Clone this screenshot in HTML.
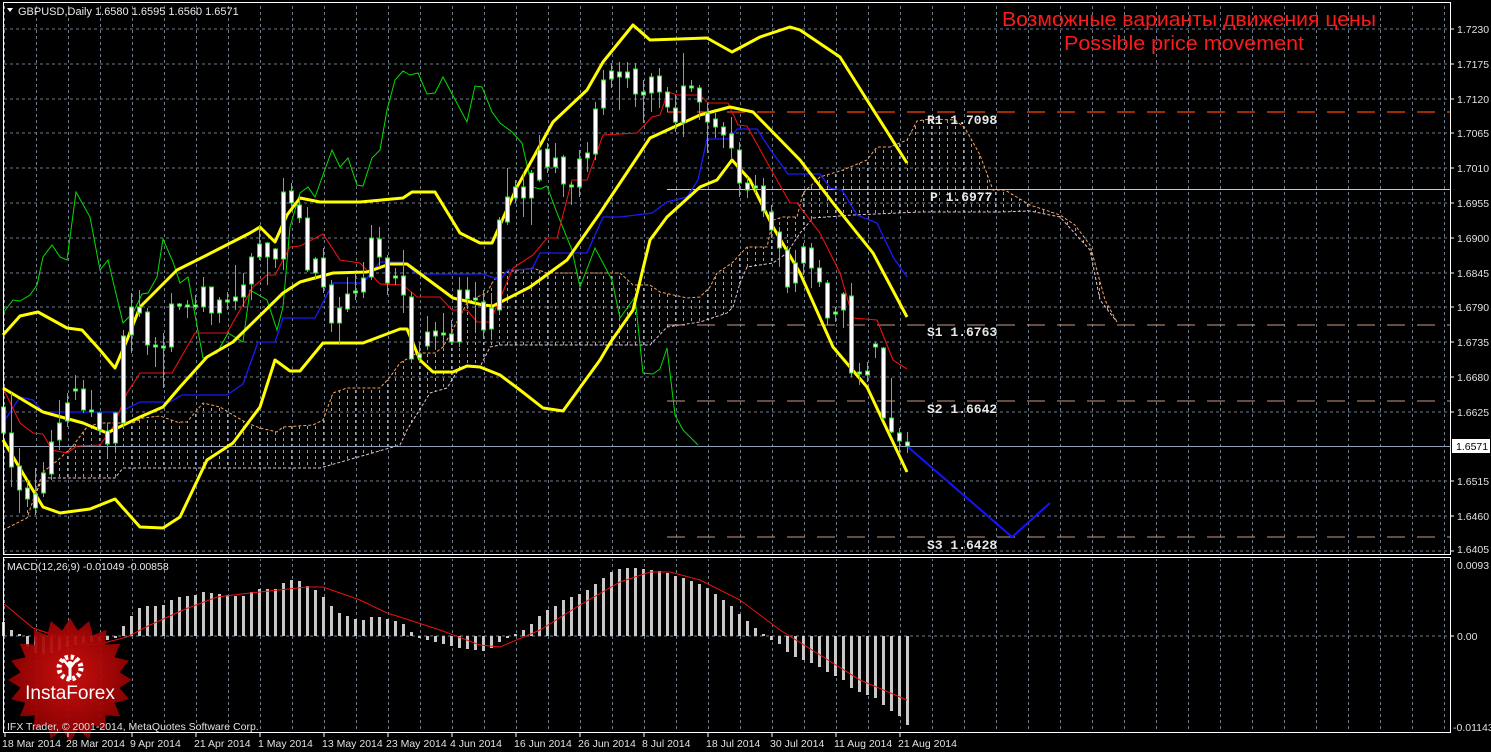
<!DOCTYPE html>
<html><head><meta charset="utf-8"><style>
html,body{margin:0;padding:0;background:#000;}
svg{display:block}
text{font-family:"Liberation Sans",sans-serif}
text.mono{font-family:"Liberation Mono",monospace;font-weight:bold;font-size:13px}
</style></head><body>
<svg width="1491" height="752" viewBox="0 0 1491 752" xmlns="http://www.w3.org/2000/svg">
<defs>
<pattern id="vg" x="36" y="0" width="32" height="6" patternUnits="userSpaceOnUse"><rect x="0" y="0" width="1" height="3" fill="#6f7d8c"/></pattern>
<pattern id="hatch" x="3" y="0" width="8" height="6" patternUnits="userSpaceOnUse"><rect x="0" y="0" width="1" height="3" fill="#d9925e"/></pattern>
<radialGradient id="rg" cx="50%" cy="45%" r="55%"><stop offset="0" stop-color="#d81010"/><stop offset="1" stop-color="#8c0000"/></radialGradient>
</defs>
<rect width="1491" height="752" fill="#000"/>
<rect x="4" y="4" width="1446" height="550" fill="url(#vg)"/>
<rect x="4" y="559" width="1446" height="173" fill="url(#vg)"/>
<path d="M4 29H1450M4 64H1450M4 99H1450M4 133H1450M4 168H1450M4 203H1450M4 238H1450M4 273H1450M4 307H1450M4 342H1450M4 377H1450M4 412H1450M4 481H1450M4 516H1450M4 551H1450M4 636H1450" stroke="#6f7d8c" stroke-width="1" stroke-dasharray="3,3"/>
<polygon fill="url(#hatch)" points="3,530 27,518 43,472 58,460 72,447 87,427 100,423 133,423 143,418 160,416 177,422 187,422 203,403 220,407 233,415 247,423 260,428 277,432 283,427 313,425 323,420 333,393 347,388 380,388 390,377 400,363 417,353 435,353 443,347 458,320 467,303 477,297 487,293 492,283 500,273 533,268 547,273 620,273 633,285 650,285 660,292 687,298 700,297 710,287 717,273 732,263 747,247 767,247 773,220 783,217 797,217 803,193 820,177 843,170 867,160 877,147 890,147 907,140 917,121 930,119 955,120 965,128 980,155 993,190 1005,190 1030,205 1060,215 1075,225 1090,245 1105,300 1117,322 1100,300 1090,250 1060,217 1030,211 1000,212 920,212 853,215 827,217 813,218 800,233 787,253 773,263 747,267 740,283 733,307 727,313 700,322 667,327 650,345 620,345 500,345 490,347 480,367 460,367 447,388 430,393 407,430 400,445 320,468 123,468 115,478 50,478 43,477 33,500 20,520 3,530"/>
<polyline fill="none" stroke="#f4a460" stroke-width="1" stroke-dasharray="3,2" points="3,530 27,518 43,472 58,460 72,447 87,427 100,423 133,423 143,418 160,416 177,422 187,422 203,403 220,407 233,415 247,423 260,428 277,432 283,427 313,425 323,420 333,393 347,388 380,388 390,377 400,363 417,353 435,353 443,347 458,320 467,303 477,297 487,293 492,283 500,273 533,268 547,273 620,273 633,285 650,285 660,292 687,298 700,297 710,287 717,273 732,263 747,247 767,247 773,220 783,217 797,217 803,193 820,177 843,170 867,160 877,147 890,147 907,140 917,121 930,119 955,120 965,128 980,155 993,190 1005,190 1030,205 1060,215 1075,225 1090,245 1105,300 1117,322"/>
<polyline fill="none" stroke="#e6c4d6" stroke-width="1" stroke-dasharray="3,2" points="33,500 43,477 50,478 115,478 123,468 320,468 400,445 407,430 430,393 447,388 460,367 480,367 490,347 500,345 650,345 667,327 700,322 727,313 733,307 740,283 747,267 773,263 787,253 800,233 813,218 827,217 853,215 920,212 1000,212 1030,211 1060,217 1090,250 1100,300 1117,322"/>
<path d="M667 112H1450" stroke="#ff4500" stroke-width="1.3" stroke-dasharray="18,12"/>
<path d="M667 189.5H1450" stroke="#ffd700" stroke-width="1"/>
<path d="M667 325H1450M667 401H1450M667 537H1450" stroke="#c89a86" stroke-width="1" stroke-dasharray="18,12"/>
<path d="M4 446.5H1450" stroke="#8fa0b4" stroke-width="1"/>
<polyline fill="none" stroke="#00e000" stroke-width="1" points="3,313 13,300 20,301 30,295 37,285 43,257 52,245 60,257 67,260 76,192 90,217 100,270 108,260 123,323 133,313 142,294 148,293 157,277 163,239 173,262 180,283 188,277 203,358 217,353 228,333 243,342 250,290 267,300 277,330 283,307 290,227 300,193 308,187 315,197 332,150 340,167 348,158 357,185 363,186 372,158 380,150 387,110 395,80 403,71 410,75 418,73 427,94 435,93 443,77 467,122 475,86 482,87 492,112 500,123 512,132 522,143 532,187 540,189 547,186 557,213 572,250 580,287 595,248 612,280 620,318 635,297 643,373 653,374 660,369 667,348 675,415 683,430 698,445"/>
<polyline fill="none" stroke="#1a1aff" stroke-width="1.3" points="3,423 20,397 33,400 43,412 120,412 140,402 170,402 182,395 227,395 243,384 258,342 275,342 283,318 315,318 333,283 363,283 380,262 403,262 417,274 483,274 500,280 508,270 532,269 540,253 587,253 603,217 620,217 652,213 667,202 687,197 698,180 707,139 730,139 737,129 757,129 772,152 788,174 820,174 830,188 842,190 857,215 877,223 893,257 907,277"/>
<polyline fill="none" stroke="#ee1010" stroke-width="1.1" points="3,388 20,423 33,433 43,434 52,450 67,453 77,446 100,445 113,427 127,393 140,373 172,373 195,333 227,333 253,287 267,275 275,275 290,247 300,246 323,234 340,260 360,263 380,284 403,285 417,297 440,297 452,310 467,310 477,322 490,322 513,268 533,255 547,238 557,238 572,180 587,180 603,135 637,133 652,117 660,115 668,92 677,95 700,95 708,103 728,103 738,125 747,126 773,173 790,203 797,203 820,233 840,273 853,318 877,320 893,360 907,369"/>
<g fill="none" stroke="#ffff00" stroke-width="3" stroke-linejoin="round">
<polyline points="3,335 20,316 38,312 67,328 82,330 100,350 115,368 127,340 140,307 177,270 207,255 250,233 260,227 275,242 287,215 300,198 320,202 360,202 403,198 412,192 435,192 460,233 480,243 492,243 517,187 553,122 587,90 603,62 633,25 650,40 707,38 732,52 760,37 790,27 800,30 840,57 867,100 907,163"/>
<polyline points="3,388 43,412 83,423 107,433 140,417 163,407 180,387 207,357 233,342 283,293 300,282 333,273 367,272 390,264 407,264 453,298 483,305 493,306 530,287 567,260 600,213 650,138 700,115 730,107 753,112 800,160 833,203 873,253 907,317"/>
<polyline points="3,440 43,507 60,513 90,509 115,499 140,527 163,528 180,517 207,460 233,443 260,407 275,360 290,371 300,371 323,343 363,343 400,329 407,329 420,360 433,372 453,372 467,366 480,367 500,375 520,390 543,408 563,411 600,360 610,343 633,310 650,240 667,217 700,187 717,180 732,160 750,180 773,227 800,273 833,347 867,387 907,472"/>
</g>
<path fill="none" stroke="#00ff00" stroke-width="1" d="M3.5 400V445M11.5 393V487M19.5 448V513M27.5 480V507M35.5 468V515M43.5 462V497M51.5 430V480M59.5 400V450M67.5 393V427M75.5 375V400M83.5 380V413M91.5 390V417M99.5 412V433M107.5 423V457M115.5 412V450M123.5 330V427M131.5 293V353M139.5 290V317M147.5 308V355M155.5 337V367M163.5 333V388M171.5 293V352M179.5 303V310M187.5 300V318M195.5 295V310M203.5 277V312M211.5 287V325M219.5 297V323M227.5 292V310M235.5 265V310M243.5 273V307M251.5 253V300M259.5 225V260M267.5 242V285M275.5 248V268M283.5 178V270M291.5 183V207M299.5 195V223M307.5 207V272M315.5 257V280M323.5 248V293M331.5 280V332M339.5 297V345M347.5 277V312M355.5 273V300M363.5 262V298M371.5 225V280M379.5 227V267M387.5 255V295M395.5 268V285M403.5 250V313M411.5 292V363M419.5 342V363M427.5 316V350M435.5 322V350M443.5 313V347M451.5 320V343M459.5 277V347M467.5 277V307M475.5 282V330M483.5 290V338M491.5 293V340M499.5 217V313M507.5 168V225M515.5 180V203M523.5 173V217M531.5 170V225M539.5 135V182M547.5 143V173M555.5 143V173M563.5 155V197M571.5 182V205M579.5 150V197M587.5 142V172M595.5 102V160M603.5 70V115M611.5 63V88M619.5 62V110M627.5 62V88M635.5 63V107M643.5 80V123M651.5 73V112M659.5 68V108M667.5 87V112M675.5 95V132M683.5 53V137M691.5 80V92M699.5 85V120M707.5 103V153M715.5 113V138M723.5 122V148M731.5 117V158M739.5 142V197M747.5 177V198M755.5 175V193M763.5 178V217M771.5 205V238M779.5 227V267M787.5 247V293M795.5 250V292M803.5 243V275M811.5 243V288M819.5 260V287M827.5 280V325M835.5 307V322M843.5 292V328M851.5 283V377M859.5 363V385M867.5 362V382M875.5 342V358M883.5 347V420M891.5 378V433M899.5 428V453M907.5 432V453"/>
<g fill="#fff" stroke="#00ff00" stroke-width="1">
<rect x="1.5" y="407" width="4" height="26"/><rect x="9.5" y="433" width="4" height="34"/><rect x="17.5" y="466" width="4" height="24"/><rect x="25.5" y="488" width="4" height="11"/><rect x="33.5" y="494" width="4" height="14"/><rect x="41.5" y="473" width="4" height="20"/><rect x="49.5" y="442" width="4" height="32"/><rect x="57.5" y="423" width="4" height="17"/><rect x="65.5" y="403" width="4" height="18"/><rect x="73.5" y="389" width="4" height="2"/><rect x="81.5" y="389" width="4" height="21"/><rect x="89.5" y="410" width="4" height="2"/><rect x="97.5" y="413" width="4" height="17"/><rect x="105.5" y="431" width="4" height="13"/><rect x="113.5" y="413" width="4" height="30"/><rect x="121.5" y="336" width="4" height="87"/><rect x="129.5" y="307" width="4" height="28"/><rect x="137.5" y="307" width="4" height="6"/><rect x="145.5" y="312" width="4" height="33"/><rect x="153.5" y="345" width="4" height="2"/><rect x="161.5" y="346" width="4" height="2"/><rect x="169.5" y="304" width="4" height="43"/><rect x="177.5" y="304" width="4" height="2"/><rect x="185.5" y="305" width="4" height="2"/><rect x="193.5" y="305" width="4" height="2"/><rect x="201.5" y="287" width="4" height="20"/><rect x="209.5" y="287" width="4" height="26"/><rect x="217.5" y="300" width="4" height="13"/><rect x="225.5" y="300" width="4" height="2"/><rect x="233.5" y="297" width="4" height="4"/><rect x="241.5" y="285" width="4" height="12"/><rect x="249.5" y="257" width="4" height="27"/><rect x="257.5" y="244" width="4" height="13"/><rect x="265.5" y="243" width="4" height="14"/><rect x="273.5" y="249" width="4" height="10"/><rect x="281.5" y="192" width="4" height="67"/><rect x="289.5" y="191" width="4" height="12"/><rect x="297.5" y="205" width="4" height="13"/><rect x="305.5" y="218" width="4" height="52"/><rect x="313.5" y="259" width="4" height="14"/><rect x="321.5" y="258" width="4" height="29"/><rect x="329.5" y="285" width="4" height="38"/><rect x="337.5" y="308" width="4" height="15"/><rect x="345.5" y="294" width="4" height="15"/><rect x="353.5" y="291" width="4" height="2"/><rect x="361.5" y="278" width="4" height="14"/><rect x="369.5" y="238" width="4" height="39"/><rect x="377.5" y="239" width="4" height="18"/><rect x="385.5" y="258" width="4" height="25"/><rect x="393.5" y="276" width="4" height="2"/><rect x="401.5" y="276" width="4" height="19"/><rect x="409.5" y="297" width="4" height="62"/><rect x="417.5" y="354" width="4" height="4"/><rect x="425.5" y="332" width="4" height="14"/><rect x="433.5" y="331" width="4" height="5"/><rect x="441.5" y="333" width="4" height="2"/><rect x="449.5" y="334" width="4" height="8"/><rect x="457.5" y="290" width="4" height="52"/><rect x="465.5" y="290" width="4" height="9"/><rect x="473.5" y="298" width="4" height="2"/><rect x="481.5" y="302" width="4" height="28"/><rect x="489.5" y="308" width="4" height="21"/><rect x="497.5" y="220" width="4" height="90"/><rect x="505.5" y="197" width="4" height="25"/><rect x="513.5" y="187" width="4" height="11"/><rect x="521.5" y="187" width="4" height="11"/><rect x="529.5" y="173" width="4" height="25"/><rect x="537.5" y="150" width="4" height="30"/><rect x="545.5" y="149" width="4" height="18"/><rect x="553.5" y="158" width="4" height="9"/><rect x="561.5" y="157" width="4" height="27"/><rect x="569.5" y="185" width="4" height="2"/><rect x="577.5" y="159" width="4" height="28"/><rect x="585.5" y="153" width="4" height="5"/><rect x="593.5" y="109" width="4" height="45"/><rect x="601.5" y="80" width="4" height="28"/><rect x="609.5" y="71" width="4" height="8"/><rect x="617.5" y="72" width="4" height="5"/><rect x="625.5" y="72" width="4" height="6"/><rect x="633.5" y="69" width="4" height="25"/><rect x="641.5" y="92" width="4" height="3"/><rect x="649.5" y="77" width="4" height="16"/><rect x="657.5" y="76" width="4" height="16"/><rect x="665.5" y="92" width="4" height="15"/><rect x="673.5" y="108" width="4" height="14"/><rect x="681.5" y="86" width="4" height="37"/><rect x="689.5" y="86" width="4" height="2"/><rect x="697.5" y="88" width="4" height="14"/><rect x="705.5" y="113" width="4" height="9"/><rect x="713.5" y="119" width="4" height="8"/><rect x="721.5" y="127" width="4" height="8"/><rect x="729.5" y="134" width="4" height="14"/><rect x="737.5" y="150" width="4" height="33"/><rect x="745.5" y="183" width="4" height="7"/><rect x="753.5" y="186" width="4" height="2"/><rect x="761.5" y="186" width="4" height="25"/><rect x="769.5" y="212" width="4" height="18"/><rect x="777.5" y="232" width="4" height="16"/><rect x="785.5" y="250" width="4" height="37"/><rect x="793.5" y="263" width="4" height="20"/><rect x="801.5" y="247" width="4" height="16"/><rect x="809.5" y="248" width="4" height="20"/><rect x="817.5" y="268" width="4" height="14"/><rect x="825.5" y="283" width="4" height="35"/><rect x="833.5" y="312" width="4" height="2"/><rect x="841.5" y="294" width="4" height="16"/><rect x="849.5" y="296" width="4" height="77"/><rect x="857.5" y="372" width="4" height="2"/><rect x="865.5" y="371" width="4" height="4"/><rect x="873.5" y="344" width="4" height="3"/><rect x="881.5" y="348" width="4" height="70"/><rect x="889.5" y="418" width="4" height="14"/><rect x="897.5" y="433" width="4" height="8"/><rect x="905.5" y="442" width="4" height="4"/>
</g>
<polyline fill="none" stroke="#1414ff" stroke-width="2" points="908,447 1012,537 1050,503"/>
<g fill="#e8e8e8">
<text class="mono" x="927" y="124">R1 1.7098</text>
<text class="mono" x="930" y="201">P 1.6977</text>
<text class="mono" x="927" y="336">S1 1.6763</text>
<text class="mono" x="927" y="413">S2 1.6642</text>
<text class="mono" x="927" y="549">S3 1.6428</text>
</g>
<text x="1189" y="26" font-size="20" fill="#ff1a1a" text-anchor="middle" textLength="374" lengthAdjust="spacingAndGlyphs">Возможные варианты движения цены</text>
<text x="1184" y="50" font-size="20" fill="#ff1a1a" text-anchor="middle" textLength="240" lengthAdjust="spacingAndGlyphs">Possible price movement</text>
<polygon points="7,8 13,8 10,12" fill="#fff"/>
<text x="18" y="15" font-size="11" fill="#e8e8e8">GBPUSD,Daily  1.6580 1.6595 1.6560 1.6571</text>
<path fill="none" stroke="#c8c8c8" stroke-width="3" d="M3.5 636V622M11.5 636V630M19.5 636V634M27.5 636V647M35.5 636V653M43.5 636V654M51.5 636V653M59.5 636V650M67.5 636V647M75.5 636V645M83.5 636V643M91.5 636V642M99.5 636V641M107.5 636V640M115.5 636V638M123.5 636V626M131.5 636V616M139.5 636V608M147.5 636V606M155.5 636V606M163.5 636V605M171.5 636V600M179.5 636V597M187.5 636V596M195.5 636V595M203.5 636V592M211.5 636V593M219.5 636V594M227.5 636V595M235.5 636V596M243.5 636V596M251.5 636V592M259.5 636V589M267.5 636V589M275.5 636V589M283.5 636V583M291.5 636V580M299.5 636V581M307.5 636V586M315.5 636V590M323.5 636V597M331.5 636V606M339.5 636V613M347.5 636V616M355.5 636V619M363.5 636V620M371.5 636V617M379.5 636V617M387.5 636V619M395.5 636V621M403.5 636V624M411.5 636V632M419.5 636V638M427.5 636V640M435.5 636V642M443.5 636V644M451.5 636V646M459.5 636V648M467.5 636V649M475.5 636V650M483.5 636V651M491.5 636V648M499.5 636V642M507.5 636V638M515.5 636V634M523.5 636V630M531.5 636V624M539.5 636V616M547.5 636V610M555.5 636V606M563.5 636V600M571.5 636V597M579.5 636V594M587.5 636V590M595.5 636V584M603.5 636V578M611.5 636V572M619.5 636V569M627.5 636V568M635.5 636V568M643.5 636V569M651.5 636V570M659.5 636V571M667.5 636V573M675.5 636V576M683.5 636V578M691.5 636V581M699.5 636V584M707.5 636V588M715.5 636V594M723.5 636V600M731.5 636V606M739.5 636V614M747.5 636V621M755.5 636V628M763.5 636V634M771.5 636V640M779.5 636V644M787.5 636V652M795.5 636V657M803.5 636V660M811.5 636V663M819.5 636V667M827.5 636V672M835.5 636V676M843.5 636V680M851.5 636V688M859.5 636V692M867.5 636V695M875.5 636V698M883.5 636V705M891.5 636V711M899.5 636V716M907.5 636V725"/>
<polyline fill="none" stroke="#ee1010" stroke-width="1" points="3,603 33,628 83,645 100,644 127,637 150,625 183,610 217,597 250,593 307,587 323,587 360,600 387,613 400,617 440,630 480,645 500,647 540,630 580,605 620,582 650,572 670,572 700,580 740,600 780,630 820,655 860,680 907,700"/>
<text x="7" y="570" font-size="10.5" fill="#e8e8e8">MACD(12,26,9) -0.01049 -0.00858</text>
<g transform="translate(0,8)" opacity="0.93">
<polygon fill="url(#rg)" points="132,672 119.4,679.8 129,691.2 114.6,694.7 120.2,708.4 105.4,707.4 106.4,722.2 92.7,716.6 89.2,731 77.8,721.4 70,734 62.2,721.4 50.8,731 47.3,716.6 33.6,722.2 34.6,707.4 19.8,708.4 25.4,694.7 11,691.2 20.6,679.8 8,672 20.6,664.2 11,652.8 25.4,649.3 19.8,635.6 34.6,636.6 33.6,621.8 47.3,627.4 50.8,613 62.2,622.6 70,610 77.8,622.6 89.2,613 92.7,627.4 106.4,621.8 105.4,636.6 120.2,635.6 114.6,649.3 129,652.8 119.4,664.2"/>
</g>
<g fill="#fff">
<circle cx="70" cy="668" r="11" fill="none" stroke="#fff" stroke-width="5" stroke-dasharray="3.2,2.6"/>
<circle cx="70" cy="668" r="7.5" fill="#b50808"/>
<circle cx="70" cy="664" r="3" fill="#fff"/>
<path d="M63 659 L70 668 L77 659" fill="none" stroke="#fff" stroke-width="2.5"/>
<rect x="68.5" y="667" width="3" height="13"/>
</g>
<text x="70" y="699" font-size="19" fill="#fff" text-anchor="middle">InstaForex</text>
<text x="7" y="730" font-size="10.5" fill="#e0e0e0">IFX Trader, © 2001-2014, MetaQuotes Software Corp.</text>
<rect x="3.5" y="2.5" width="1447" height="552" fill="none" stroke="#fff" stroke-width="1"/>
<rect x="3.5" y="557.5" width="1447" height="175" fill="none" stroke="#fff" stroke-width="1"/>
<g font-size="10.5" fill="#e0e0e0">
<path d="M1451 29h3M1451 64h3M1451 99h3M1451 133h3M1451 168h3M1451 203h3M1451 238h3M1451 273h3M1451 307h3M1451 342h3M1451 377h3M1451 412h3M1451 481h3M1451 516h3M1451 551h3M1451 636h3" stroke="#fff"/>
<text x="1457" y="33">1.7230</text><text x="1457" y="68">1.7175</text><text x="1457" y="103">1.7120</text><text x="1457" y="137">1.7065</text><text x="1457" y="172">1.7010</text><text x="1457" y="207">1.6955</text><text x="1457" y="242">1.6900</text><text x="1457" y="277">1.6845</text><text x="1457" y="311">1.6790</text><text x="1457" y="346">1.6735</text><text x="1457" y="381">1.6680</text><text x="1457" y="416">1.6625</text><text x="1457" y="485">1.6515</text><text x="1457" y="520">1.6460</text><text x="1457" y="553">1.6405</text>
<text x="1457" y="569">0.0093</text><text x="1457" y="640">0.00</text><text x="1453" y="731">-0.01143</text>
</g>
<rect x="1452" y="439" width="38" height="14" fill="#fff"/>
<text x="1456" y="450" font-size="10.5" fill="#000">1.6571</text>
<path d="M5 733v4M68 733v4M132 733v4M196 733v4M260 733v4M324 733v4M388 733v4M452 733v4M516 733v4M580 733v4M644 733v4M708 733v4M772 733v4M836 733v4M900 733v4" stroke="#fff"/>
<g font-size="10.5" fill="#e0e0e0">
<text x="2" y="747">18 Mar 2014</text><text x="66" y="747">28 Mar 2014</text><text x="130" y="747">9 Apr 2014</text><text x="194" y="747">21 Apr 2014</text><text x="258" y="747">1 May 2014</text><text x="322" y="747">13 May 2014</text><text x="386" y="747">23 May 2014</text><text x="450" y="747">4 Jun 2014</text><text x="514" y="747">16 Jun 2014</text><text x="578" y="747">26 Jun 2014</text><text x="642" y="747">8 Jul 2014</text><text x="706" y="747">18 Jul 2014</text><text x="770" y="747">30 Jul 2014</text><text x="834" y="747">11 Aug 2014</text><text x="898" y="747">21 Aug 2014</text>
</g>
</svg>
</body></html>
